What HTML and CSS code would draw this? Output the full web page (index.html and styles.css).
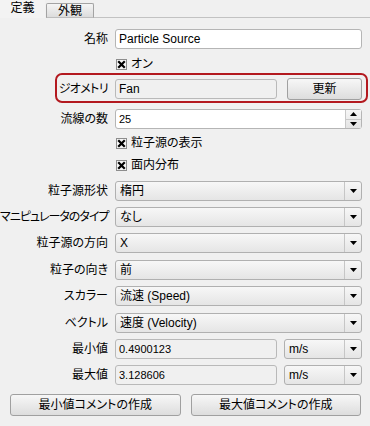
FILE: index.html
```html
<!DOCTYPE html>
<html lang="ja">
<head>
<meta charset="utf-8">
<link rel="stylesheet" href="styles.css">
</head>
<body>
<div class="tabs">
  <div class="tab active">定義</div>
  <div class="tab inactive">外観</div>
  <div class="tab-fill"></div>
</div>
<div class="panel">
  <div class="row"><span class="lbl">名称</span><div class="input">Particle Source</div></div>
  <div class="row check-row"><span></span><div class="check"><svg class="box" width="11" height="11" viewBox="0 0 11 11"><rect x="0.5" y="0.5" width="10" height="10" fill="#f6f6f6" stroke="#8d8d8d"/><path d="M3 3 L8 8 M8 3 L3 8" stroke="#000" stroke-width="2.2" stroke-linecap="square"/></svg>オン</div></div>
  <div class="row geo"><span class="lbl semi">ジオメトリ</span><div class="pair"><div class="input disabled">Fan</div><div class="btn upd">更新</div></div></div>
  <div class="row"><span class="lbl">流線の数</span><div class="spin"><div class="val num">25</div><div class="spin-btns"><div class="sb"><svg width="7" height="4" viewBox="0 0 7 4"><polygon points="0,4 7,4 3.5,0" fill="#000"/></svg></div><div class="sb"><svg width="7" height="4" viewBox="0 0 7 4"><polygon points="0,0 7,0 3.5,4" fill="#000"/></svg></div></div></div></div>
  <div class="row check-row"><span></span><div class="check"><svg class="box" width="11" height="11" viewBox="0 0 11 11"><rect x="0.5" y="0.5" width="10" height="10" fill="#f6f6f6" stroke="#8d8d8d"/><path d="M3 3 L8 8 M8 3 L3 8" stroke="#000" stroke-width="2.2" stroke-linecap="square"/></svg>粒子源の表示</div></div>
  <div class="row check-row"><span></span><div class="check"><svg class="box" width="11" height="11" viewBox="0 0 11 11"><rect x="0.5" y="0.5" width="10" height="10" fill="#f6f6f6" stroke="#8d8d8d"/><path d="M3 3 L8 8 M8 3 L3 8" stroke="#000" stroke-width="2.2" stroke-linecap="square"/></svg>面内分布</div></div>
  <div class="row first-combo"><span class="lbl">粒子源形状</span><div class="combo"><div class="val">楕円</div><div class="arrow"><svg width="7" height="4" viewBox="0 0 7 4"><polygon points="0,0 7,0 3.5,4" fill="#000"/></svg></div></div></div>
  <div class="row"><span class="lbl narrow">マニピュレータのタイプ</span><div class="combo"><div class="val">なし</div><div class="arrow"><svg width="7" height="4" viewBox="0 0 7 4"><polygon points="0,0 7,0 3.5,4" fill="#000"/></svg></div></div></div>
  <div class="row"><span class="lbl">粒子源の方向</span><div class="combo"><div class="val">X</div><div class="arrow"><svg width="7" height="4" viewBox="0 0 7 4"><polygon points="0,0 7,0 3.5,4" fill="#000"/></svg></div></div></div>
  <div class="row tall"><span class="lbl">粒子の向き</span><div class="combo"><div class="val">前</div><div class="arrow"><svg width="7" height="4" viewBox="0 0 7 4"><polygon points="0,0 7,0 3.5,4" fill="#000"/></svg></div></div></div>
  <div class="row"><span class="lbl">スカラー</span><div class="combo"><div class="val">流速 (Speed)</div><div class="arrow"><svg width="7" height="4" viewBox="0 0 7 4"><polygon points="0,0 7,0 3.5,4" fill="#000"/></svg></div></div></div>
  <div class="row tall"><span class="lbl">ベクトル</span><div class="combo"><div class="val">速度 (Velocity)</div><div class="arrow"><svg width="7" height="4" viewBox="0 0 7 4"><polygon points="0,0 7,0 3.5,4" fill="#000"/></svg></div></div></div>
  <div class="row"><span class="lbl">最小値</span><div class="pair unit-pair"><div class="input disabled num">0.4900123</div><div class="combo unit"><div class="val">m/s</div><div class="arrow"><svg width="7" height="4" viewBox="0 0 7 4"><polygon points="0,0 7,0 3.5,4" fill="#000"/></svg></div></div></div></div>
  <div class="row"><span class="lbl">最大値</span><div class="pair unit-pair"><div class="input disabled num">3.128606</div><div class="combo unit"><div class="val">m/s</div><div class="arrow"><svg width="7" height="4" viewBox="0 0 7 4"><polygon points="0,0 7,0 3.5,4" fill="#000"/></svg></div></div></div></div>
  <div class="btn-row">
    <div class="btn wide">最小値コメントの作成</div>
    <div class="btn wide">最大値コメントの作成</div>
  </div>
</div>
</body>
</html>
```
FILE: styles.css
```css
html, body {
  margin: 0;
  padding: 0;
  background: #f0f0f0;
}
body {
  width: 370px;
  height: 426px;
  overflow: hidden;
  font-family: "Liberation Sans", "Noto Sans CJK JP", sans-serif;
  font-size: 12px;
  color: #000;
  font-feature-settings: "palt";
}
.tabs {
  display: flex;
  align-items: flex-end;
  height: 18px;
}
.tab {
  box-sizing: border-box;
  display: flex;
  align-items: center;
  justify-content: center;
  line-height: 14px;
}
.tab.active {
  width: 45px;
  height: 18px;
  background: #f3f3f3;
  padding-bottom: 2px;
}
.tab.inactive {
  width: 48px;
  height: 15px;
  margin-left: 1px;
  border: 1px solid #a3a3a3;
  border-bottom: 1px solid #bdbdbd;
  border-radius: 2px 2px 0 0;
  background: linear-gradient(#f5f5f5, #dcdcdc);
  padding-top: 1px;
}
.tab-fill {
  flex: 1;
  height: 1px;
  background: #c2c2c2;
}
.panel {
  padding-top: 8px;
}
.row {
  position: relative;
  display: grid;
  grid-template-columns: 108px 1fr;
  column-gap: 7px;
  align-items: center;
  height: 26px;
  padding-right: 8px;
}
.row.tall {
  height: 27px;
}
.row.check-row {
  height: 22px;
}
.row.check-row:nth-child(2) {
  height: 24px;
}
.row.first-combo {
  margin-top: 2px;
}
.row.geo {
  margin-bottom: 4px;
}
.row.geo::after {
  content: "";
  position: absolute;
  left: 55px;
  right: 2px;
  top: -3px;
  bottom: -1px;
  border: 2px solid #b3191f;
  border-radius: 7px;
}
.lbl {
  text-align: right;
  white-space: nowrap;
  line-height: 16px;
}
.lbl.narrow {
  letter-spacing: -1px;
}
.lbl.semi {
  letter-spacing: -0.6px;
}
.input {
  box-sizing: border-box;
  height: 20px;
  line-height: 18px;
  border: 1px solid #b5b5b5;
  border-radius: 3px;
  background: #fff;
  padding-left: 3px;
  white-space: nowrap;
  overflow: hidden;
}
.input.disabled {
  background: #f0f0f0;
  border-color: #b9b9b9;
}
.num {
  font-size: 11px;
}
.check {
  display: flex;
  align-items: center;
  gap: 4px;
  padding-left: 1px;
  line-height: 16px;
}
.box {
  display: block;
  flex: none;
}
.pair {
  display: flex;
  align-items: center;
  gap: 10px;
}
.pair .input {
  flex: 1;
}
.unit-pair {
  gap: 7px;
}
.btn {
  box-sizing: border-box;
  display: flex;
  align-items: center;
  justify-content: center;
  border: 1px solid #a0a0a0;
  border-radius: 3px;
  background: linear-gradient(#f7f7f7, #dddddd);
  line-height: 16px;
}
.btn.upd {
  width: 75px;
  height: 22px;
}
.spin {
  box-sizing: border-box;
  display: flex;
  height: 20px;
  border: 1px solid #b5b5b5;
  border-radius: 3px;
  background: #fff;
}
.spin .val {
  flex: 1;
  padding-left: 3px;
  line-height: 18px;
}
.spin-btns {
  width: 15px;
  display: flex;
  flex-direction: column;
  border-left: 1px solid #c8c8c8;
  background: linear-gradient(#f6f6f6, #e4e4e4);
}
.sb {
  flex: 1;
  display: flex;
  align-items: center;
  justify-content: center;
}
.sb + .sb {
  border-top: 1px solid #c8c8c8;
}
.sb svg, .arrow svg {
  display: block;
}
.combo {
  box-sizing: border-box;
  display: flex;
  height: 20px;
  border: 1px solid #b0b0b0;
  border-radius: 3px;
  background: linear-gradient(#f7f7f7, #e5e5e5);
}
.combo .val {
  flex: 1;
  padding-left: 4px;
  line-height: 18px;
  white-space: nowrap;
}
.combo .arrow {
  width: 16px;
  display: flex;
  align-items: center;
  justify-content: center;
  border-left: 1px solid #c6c6c6;
}
.combo.unit {
  width: 78px;
  flex: none;
}
.btn-row {
  display: flex;
  gap: 10px;
  padding: 6px 9px 0 10px;
}
.btn.wide {
  flex: 1;
  height: 22px;
}
```
